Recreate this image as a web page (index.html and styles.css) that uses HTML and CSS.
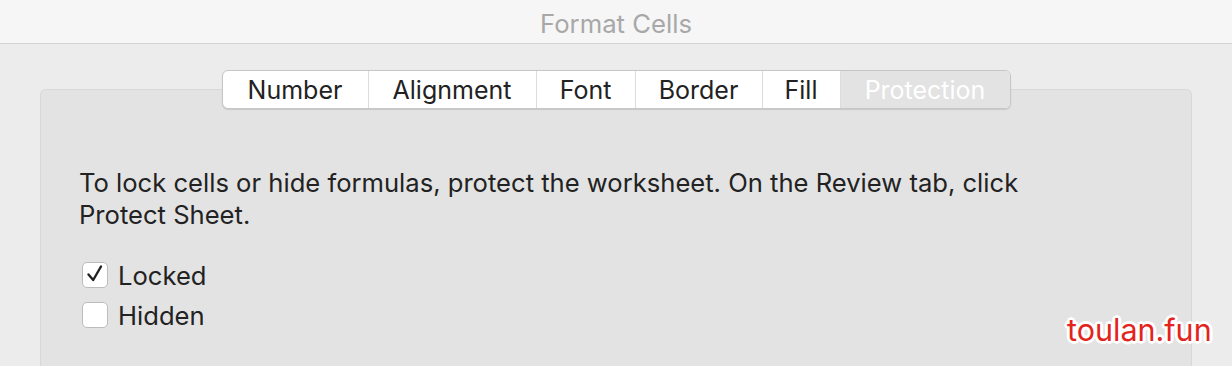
FILE: index.html
```html
<!DOCTYPE html>
<html lang="en">
<head>
  <meta charset="UTF-8">
  <title>Format Cells</title>
  <link rel="stylesheet" href="styles.css">
</head>
<body>
  <div class="title-bar">Format Cells</div>

  <div class="content">
    <div class="tabs">
      <div class="tab tab-number">Number</div>
      <div class="tab tab-alignment">Alignment</div>
      <div class="tab tab-font">Font</div>
      <div class="tab tab-border">Border</div>
      <div class="tab tab-fill">Fill</div>
      <div class="tab tab-protection active">Protection</div>
    </div>

    <div class="panel">
      <p class="info">To lock cells or hide formulas, protect the worksheet. On the Review tab, click<br>Protect Sheet.</p>

      <label class="check-row">
        <span class="check-box">
          <svg width="24" height="24" viewBox="0 0 24 24"><path d="M5.5 11.5 L10.2 17 L18 3.5" fill="none" stroke="#222" stroke-width="2.4" stroke-linecap="round" stroke-linejoin="round"/></svg>
        </span>
        Locked
      </label>
      <label class="check-row">
        <span class="check-box"></span>
        Hidden
      </label>
    </div>
  </div>

  <div class="watermark">toulan.fun</div>
</body>
</html>
```

FILE: styles.css
```css
body {
  margin: 0;
  background-color: #ececec;
  font-family: Inter, "Liberation Sans", sans-serif;
  color: #222;
  height: 366px;
  overflow: hidden;
  position: relative;
}

.title-bar {
  height: 44px;
  line-height: 48px;
  text-align: center;
  font-size: 25.7px;
  color: #a8a8a8;
  background: #f6f6f6;
  border-bottom: 1px solid #d3d3d3;
  box-sizing: border-box;
}

.content {
  padding: 26px 40px 0 40px;
}

.tabs {
  display: flex;
  width: 789px;
  height: 39px;
  margin: 0 auto;
  position: relative;
  z-index: 1;
  background: #fff;
  border: 1px solid #c6c6c6;
  border-radius: 6px;
  box-sizing: border-box;
  box-shadow: 0 1px 1px rgba(0, 0, 0, 0.12);
  overflow: hidden;
}

.tab {
  font-size: 25px;
  line-height: 38px;
  text-align: center;
  border-right: 1px solid #dcdcdc;
  box-sizing: border-box;
}

.tab-number { width: 146px; }
.tab-alignment { width: 168px; }
.tab-font { width: 99px; }
.tab-border { width: 127px; }
.tab-fill { width: 78px; }
.tab-protection { flex: 1; border-right: none; }

.tab.active {
  background: #e3e3e3;
  color: #fff;
}

.panel {
  margin-top: -20px;
  height: 277px;
  background: #e3e3e3;
  border: 1px solid #d8d8d8;
  border-bottom: none;
  border-radius: 6px 6px 0 0;
  padding: 77px 0 0 38px;
  box-sizing: border-box;
}

.info {
  margin: 0 0 24px 0;
  font-size: 25.6px;
  line-height: 32px;
}

.check-row {
  display: flex;
  align-items: center;
  gap: 10px;
  font-size: 25.6px;
  height: 40px;
  margin-left: 3px;
}

.check-box {
  width: 26px;
  height: 26px;
  background: #fff;
  border: 1px solid #bcbcbc;
  border-radius: 5px;
  box-sizing: border-box;
  display: flex;
  align-items: center;
  justify-content: center;
}

.watermark {
  position: absolute;
  left: 1067px;
  top: 311px;
  font-size: 30.5px;
  color: #e3241d;
  text-shadow: 0 0 3px #fff, 2px 2px 0 #fff, -2px -2px 0 #fff, 2px -2px 0 #fff, -2px 2px 0 #fff, 3px 0 0 #fff, -3px 0 0 #fff, 0 3px 0 #fff, 0 -3px 0 #fff;
}
```
